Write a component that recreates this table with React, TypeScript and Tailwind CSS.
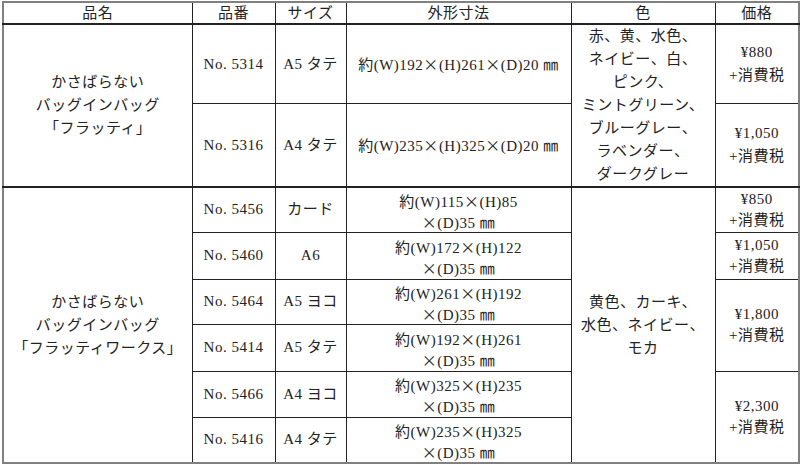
import React from 'react';

// full-width multiplication sign, taken from the CJK face
const X = () => <span className="font-['Noto_Sans_CJK_JP',sans-serif]">×</span>;

const cell = 'border border-[#222] p-0 text-center align-middle';
// fixed-height line so mixed fonts do not stretch the row
const line = 'h-[21px] leading-[21px] whitespace-nowrap';

interface WorksRow {
  no: string;
  size: string;
  w: string;
  h: string;
  price?: string;
  priceSpan?: number;
  height: string;
}

const worksRows: WorksRow[] = [
  { no: 'No. 5456', size: 'カード', w: '115', h: '85', price: '¥850', priceSpan: 1, height: 'h-[45px]' },
  { no: 'No. 5460', size: 'A6', w: '172', h: '122', price: '¥1,050', priceSpan: 1, height: 'h-[47px]' },
  { no: 'No. 5464', size: 'A5 ヨコ', w: '261', h: '192', price: '¥1,800', priceSpan: 2, height: 'h-[45px]' },
  { no: 'No. 5414', size: 'A5 タテ', w: '192', h: '261', height: 'h-[47px]' },
  { no: 'No. 5466', size: 'A4 ヨコ', w: '325', h: '235', price: '¥2,300', priceSpan: 2, height: 'h-[46px]' },
  { no: 'No. 5416', size: 'A4 タテ', w: '235', h: '325', height: 'h-[46px]' },
];

const Price: React.FC<{ value: string; tight?: boolean }> = ({ value, tight }) => (
  <>
    <div className={tight ? line : ''}>{value}</div>
    <div className={tight ? line : ''}>+消費税</div>
  </>
);

const App: React.FC = () => {
  return (
    <div className="w-[800px] h-[467px] overflow-hidden bg-white pt-[1px] pl-[2px]">
      <table className="w-[796px] table-fixed border-collapse border-2 border-[#808080] bg-white text-[15px] leading-[23px] tracking-[0.5px] text-[#222] font-['Liberation_Serif','Noto_Sans_CJK_JP',serif]">
        <colgroup>
          <col className="w-[189px]" />
          <col className="w-[83px]" />
          <col className="w-[71px]" />
          <col className="w-[225px]" />
          <col className="w-[144px]" />
          <col className="w-[84px]" />
        </colgroup>
        <thead>
          <tr className="h-[21px] leading-[20px]">
            <th className={`${cell} border-b-2 font-normal`}>品名</th>
            <th className={`${cell} border-b-2 font-normal`}>品番</th>
            <th className={`${cell} border-b-2 font-normal`}>サイズ</th>
            <th className={`${cell} border-b-2 font-normal`}>外形寸法</th>
            <th className={`${cell} border-b-2 font-normal`}>色</th>
            <th className={`${cell} border-b-2 font-normal`}>価格</th>
          </tr>
        </thead>
        <tbody>
          {/* フラッティ */}
          <tr className="h-[77px]">
            <td rowSpan={2} className={cell}>
              <div>かさばらない</div>
              <div>バッグインバッグ</div>
              <div>「フラッティ」</div>
            </td>
            <td className={cell}>No. 5314</td>
            <td className={cell}>A5 タテ</td>
            <td className={cell}>
              約(W)192<X />(H)261<X />(D)20 ㎜
            </td>
            <td rowSpan={2} className={cell}>
              <div>赤、黄、水色、</div>
              <div>ネイビー、白、</div>
              <div>ピンク、</div>
              <div>ミントグリーン、</div>
              <div>ブルーグレー、</div>
              <div>ラベンダー、</div>
              <div>ダークグレー</div>
            </td>
            <td className={cell}>
              <Price value="¥880" />
            </td>
          </tr>
          <tr className="h-[80px]">
            <td className={cell}>No. 5316</td>
            <td className={cell}>A4 タテ</td>
            <td className={cell}>
              約(W)235<X />(H)325<X />(D)20 ㎜
            </td>
            <td className={cell}>
              <Price value="¥1,050" />
            </td>
          </tr>

          {/* フラッティワークス */}
          {worksRows.map((r, i) => (
            <tr key={r.no} className={r.height}>
              {i === 0 && (
                <td rowSpan={6} className={`${cell} border-t-2`}>
                  <div>かさばらない</div>
                  <div>バッグインバッグ</div>
                  <div>「フラッティワークス」</div>
                </td>
              )}
              <td className={`${cell} ${i === 0 ? 'border-t-2' : ''}`}>
                <div className={line}>{r.no}</div>
              </td>
              <td className={`${cell} ${i === 0 ? 'border-t-2' : ''}`}>
                <div className={line}>{r.size}</div>
              </td>
              <td className={`${cell} ${i === 0 ? 'border-t-2' : ''}`}>
                <div className={`${line} leading-[23px]`}>
                  約(W){r.w}<X />(H){r.h}
                </div>
                <div className={`${line} leading-[23px]`}>
                  <X />(D)35 ㎜
                </div>
              </td>
              {i === 0 && (
                <td rowSpan={6} className={`${cell} border-t-2`}>
                  <div>黄色、カーキ、</div>
                  <div>水色、ネイビー、</div>
                  <div>モカ</div>
                </td>
              )}
              {r.price && (
                <td rowSpan={r.priceSpan} className={`${cell} ${i === 0 ? 'border-t-2' : ''}`}>
                  <Price value={r.price} tight />
                </td>
              )}
            </tr>
          ))}
        </tbody>
      </table>
    </div>
  );
};

export default App;
